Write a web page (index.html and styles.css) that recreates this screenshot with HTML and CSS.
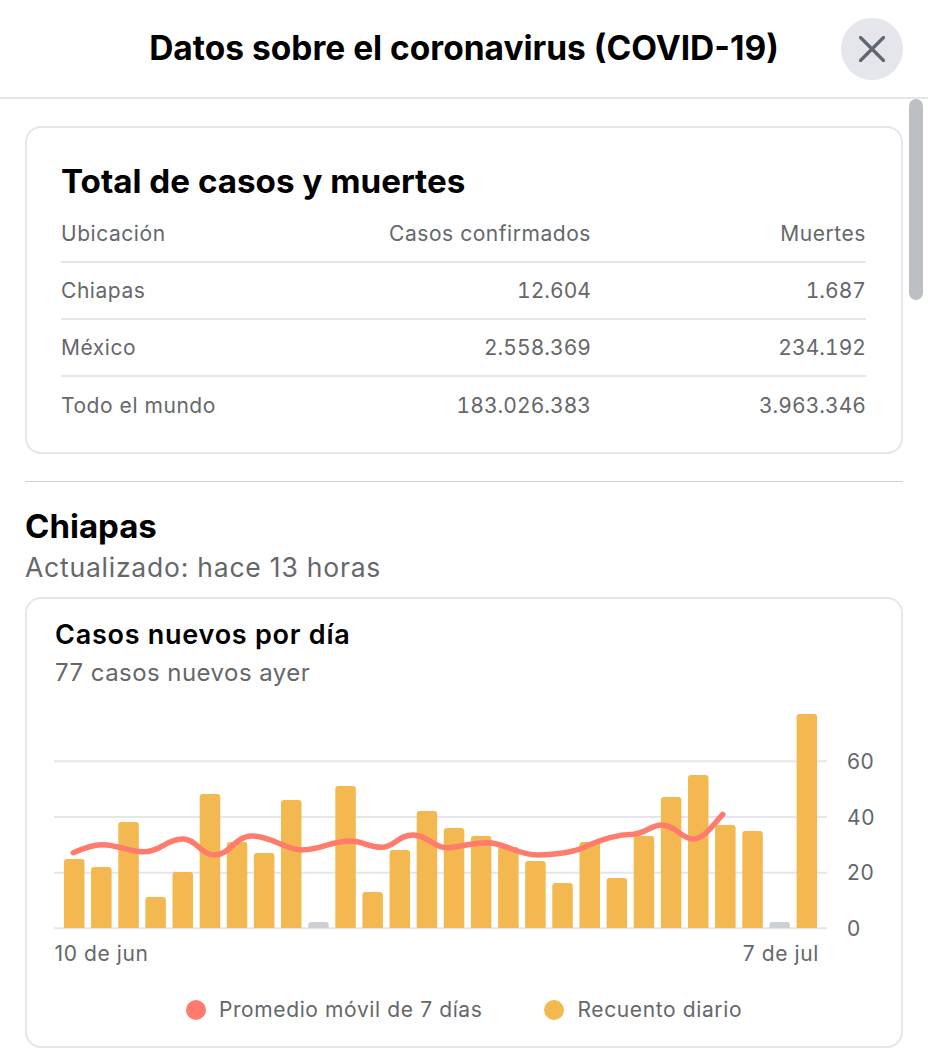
FILE: index.html
```html
<!DOCTYPE html>
<html lang="es">
<head>
<meta charset="utf-8">
<title>Datos sobre el coronavirus (COVID-19)</title>
<link rel="stylesheet" href="styles.css">
</head>
<body>
<div class="dialog">
  <header class="top">
    <h1 class="top-title">Datos sobre el coronavirus (COVID-19)</h1>
    <button class="close" aria-label="Cerrar">
      <svg class="close-icon" viewBox="0 0 26 26"><path d="M1.500 1.500 24.500 24.500M24.500 1.500 1.500 24.500"/></svg>
    </button>
  </header>
  <div class="thumb"></div>
  <main class="content">
    <section class="card totals">
      <h2 class="totals-title">Total de casos y muertes</h2>
      <table class="table">
        <thead>
          <tr><th>Ubicación</th><th>Casos confirmados</th><th>Muertes</th></tr>
        </thead>
        <tbody>
          <tr><td>Chiapas</td><td class="num">12.604</td><td class="num">1.687</td></tr>
          <tr><td>México</td><td class="num">2.558.369</td><td class="num">234.192</td></tr>
          <tr><td>Todo el mundo</td><td class="num">183.026.383</td><td class="num">3.963.346</td></tr>
        </tbody>
      </table>
    </section>
    <hr class="rule">
    <h2 class="place">Chiapas</h2>
    <p class="updated">Actualizado: hace 13 horas</p>
    <section class="card chart-card">
      <h3 class="chart-title">Casos nuevos por día</h3>
      <p class="chart-sub">77 casos nuevos ayer</p>
      <svg class="chart" viewBox="0 0 876 262" width="876" height="262">
        <g class="grid">
          <path d="M27 47.300H800"/><path d="M27 103H800"/><path d="M27 158.700H800"/><path d="M27 214.300H800"/>
        </g>
        <g class="bars">
          <path d="M37 214v-66a3 3 0 0 1 3-3h14.500a3 3 0 0 1 3 3v66z"/>
          <path d="M64.100 214v-58a3 3 0 0 1 3-3h14.500a3 3 0 0 1 3 3v58z"/>
          <path d="M91.300 214v-103a3 3 0 0 1 3-3h14.500a3 3 0 0 1 3 3v103z"/>
          <path d="M118.400 214v-28a3 3 0 0 1 3-3h14.500a3 3 0 0 1 3 3v28z"/>
          <path d="M145.500 214v-53a3 3 0 0 1 3-3h14.500a3 3 0 0 1 3 3v53z"/>
          <path d="M172.700 214v-131a3 3 0 0 1 3-3h14.500a3 3 0 0 1 3 3v131z"/>
          <path d="M199.800 214v-83a3 3 0 0 1 3-3h14.500a3 3 0 0 1 3 3v83z"/>
          <path d="M226.900 214v-72a3 3 0 0 1 3-3h14.500a3 3 0 0 1 3 3v72z"/>
          <path d="M254 214v-125a3 3 0 0 1 3-3h14.500a3 3 0 0 1 3 3v125z"/>
          <path class="bar-empty" d="M281.200 214v-3a3 3 0 0 1 3-3h14.500a3 3 0 0 1 3 3v3z"/>
          <path d="M308.300 214v-139a3 3 0 0 1 3-3h14.500a3 3 0 0 1 3 3v139z"/>
          <path d="M335.400 214v-33a3 3 0 0 1 3-3h14.500a3 3 0 0 1 3 3v33z"/>
          <path d="M362.600 214v-75a3 3 0 0 1 3-3h14.500a3 3 0 0 1 3 3v75z"/>
          <path d="M389.700 214v-114a3 3 0 0 1 3-3h14.500a3 3 0 0 1 3 3v114z"/>
          <path d="M416.800 214v-97a3 3 0 0 1 3-3h14.500a3 3 0 0 1 3 3v97z"/>
          <path d="M443.900 214v-89a3 3 0 0 1 3-3h14.500a3 3 0 0 1 3 3v89z"/>
          <path d="M471.100 214v-78a3 3 0 0 1 3-3h14.500a3 3 0 0 1 3 3v78z"/>
          <path d="M498.200 214v-64a3 3 0 0 1 3-3h14.500a3 3 0 0 1 3 3v64z"/>
          <path d="M525.300 214v-42a3 3 0 0 1 3-3h14.500a3 3 0 0 1 3 3v42z"/>
          <path d="M552.500 214v-83a3 3 0 0 1 3-3h14.500a3 3 0 0 1 3 3v83z"/>
          <path d="M579.600 214v-47a3 3 0 0 1 3-3h14.500a3 3 0 0 1 3 3v47z"/>
          <path d="M606.700 214v-89a3 3 0 0 1 3-3h14.500a3 3 0 0 1 3 3v89z"/>
          <path d="M633.900 214v-128a3 3 0 0 1 3-3h14.500a3 3 0 0 1 3 3v128z"/>
          <path d="M661 214v-150a3 3 0 0 1 3-3h14.500a3 3 0 0 1 3 3v150z"/>
          <path d="M688.100 214v-100a3 3 0 0 1 3-3h14.500a3 3 0 0 1 3 3v100z"/>
          <path d="M715.300 214v-94a3 3 0 0 1 3-3h14.500a3 3 0 0 1 3 3v94z"/>
          <path class="bar-empty" d="M742.400 214v-3a3 3 0 0 1 3-3h14.500a3 3 0 0 1 3 3v3z"/>
          <path d="M769.600 214v-211a3 3 0 0 1 3-3h14.500a3 3 0 0 1 3 3v211z"/>
        </g>
        <path class="trend" d="M46.300 138.700C57 134 65 130.800 74.700 130.700C91 130.500 100 137.700 116.300 137.700C134 137.700 139 125 156.300 125C169 125 174 141 188 141C203 141 208 122 224.700 122C244 122 259 136 274.700 136C294 136 304 127 323 127C336 127 341 133.300 354.700 133.300C367 133.300 371 121 386.300 121C401 121 406 133.800 419.700 133.800C429 133.800 444 128.700 459.700 128.700C479 128.700 489 141 511.300 141C524 141 544 139 556 133.700C569 128 579 124.800 583 123.700C594 120.500 599 120.300 606 120.300C619 119 624 111 634.700 111C649 111 654 125 666.300 125C677 125 687 110 695.700 100.300"/>
        <g class="labels">
          <text x="820" y="54.500">60</text>
          <text x="820" y="110.500">40</text>
          <text x="820" y="166">20</text>
          <text x="820" y="222">0</text>
          <text x="27.500" y="247">10 de jun</text>
          <text x="792" y="247" text-anchor="end">7 de jul</text>
        </g>
      </svg>
      <div class="legend">
        <span class="legend-item"><i class="dot dot-red"></i>Promedio móvil de 7 días</span>
        <span class="legend-item"><i class="dot dot-amber"></i>Recuento diario</span>
      </div>
    </section>
  </main>
</div>
</body>
</html>
```
FILE: styles.css
```css
* { box-sizing: border-box; }
html, body { margin: 0; padding: 0; background: #fff; }
body { font-family: Inter, "Liberation Sans", sans-serif; color: #050505; }
.dialog { position: relative; width: 928px; height: 1060px; overflow: hidden; }

.top { display: flex; align-items: center; justify-content: center; height: 99px; padding-bottom: 2px; border-bottom: 2px solid #e4e6eb; position: relative; }
.top-title { margin: 0; font-size: 33.5px; font-weight: 700; line-height: 40px; color: #000; }
.close { position: absolute; top: 18px; right: 25px; width: 62px; height: 62px; border: 0; padding: 0; border-radius: 50%; background: #e4e6eb; display: flex; align-items: center; justify-content: center; }
.close-icon { width: 26px; height: 26px; fill: none; stroke: #606770; stroke-width: 3.2px; stroke-linecap: round; }
.thumb { position: absolute; top: 99px; right: 5px; width: 14px; height: 201px; border-radius: 7px; background: #bcc0c4; }

.content { padding: 27px 25px 0; }
.card { border: 2px solid #e4e6eb; border-radius: 16px; background: #fff; }

.totals { height: 328px; padding: 30px 35px 0 34px; }
.totals-title { margin: 0 0 1px; font-size: 33.2px; line-height: 46px; font-weight: 700; color: #000; }
.table { width: 100%; border-collapse: collapse; table-layout: fixed; font-size: 21px; letter-spacing: .55px; color: #65676b; }
.table th, .table td { height: 57px; padding: 0; font-weight: 400; text-align: right; vertical-align: middle; }
.table th:first-child, .table td:first-child { text-align: left; }
.table th:nth-child(1) { width: 260px; }
.table th:nth-child(3) { width: 275px; }
.table tbody tr { border-top: 2px solid #e4e6eb; }
.table .num { letter-spacing: .05px; font-variant-numeric: tabular-nums; }

.rule { height: 1px; margin: 27px 0 0; border: 0; background: #ced0d4; }
.place { margin: 22px 0 0; font-size: 33px; line-height: 44px; font-weight: 700; color: #000; }
.updated { margin: 1px 0 0; font-size: 26.5px; letter-spacing: .78px; line-height: 36px; color: #65676b; }

.chart-card { margin-top: 12px; height: 451px; padding: 18px 0 0; }
.chart-title { margin: 0 0 0 28px; font-size: 27px; letter-spacing: .75px; line-height: 36px; font-weight: 600; color: #000; }
.chart-sub { margin: 2px 0 0 28px; font-size: 24px; letter-spacing: .45px; line-height: 36px; color: #65676b; }
.chart { display: block; margin-top: 23px; overflow: visible; }
.grid path { stroke: #e4e6eb; stroke-width: 2px; fill: none; }
.bars path { fill: #f3b950; }
.bars .bar-empty { fill: #ccd0d5; }
.trend { fill: none; stroke: #ff7b6b; stroke-width: 5.5px; stroke-linecap: round; stroke-linejoin: round; }
.labels text { font-size: 21px; letter-spacing: .6px; fill: #65676b; }

.legend { display: flex; justify-content: center; gap: 62px; font-size: 21px; letter-spacing: .62px; line-height: 28px; color: #65676b; margin-top: 20px; }
.legend-item { display: flex; align-items: center; gap: 13px; }
.dot { width: 20px; height: 20px; border-radius: 50%; display: block; }
.dot-red { background: #ff7b6b; }
.dot-amber { background: #f3b950; }
```
